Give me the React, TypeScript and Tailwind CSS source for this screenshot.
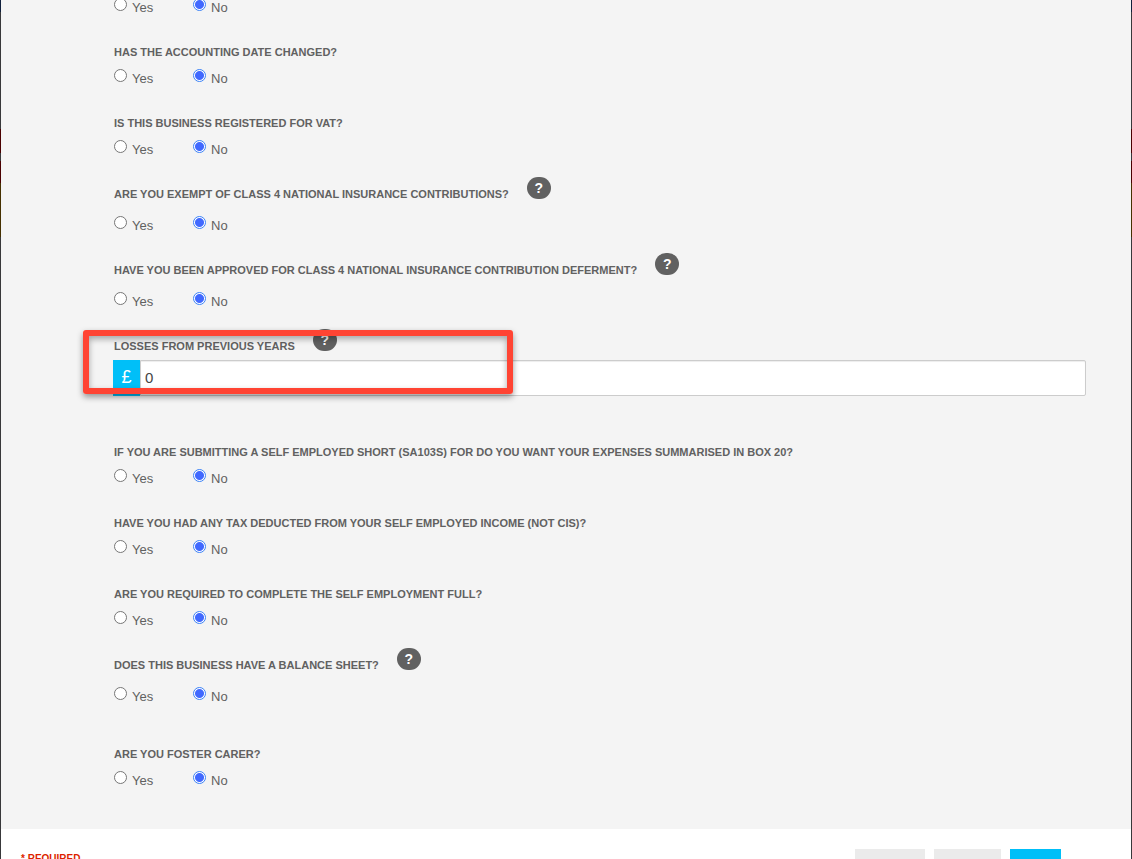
import React, { useState } from "react";

type QuestionProps = {
  name: string;
  title: string;
  help?: boolean;
};

const HelpButton = () => (
  <button
    type="button"
    aria-label="Help"
    className="-mt-[7px] ml-[18px] h-[22px] w-6 shrink-0 rounded-full bg-[#616161] text-center text-sm leading-[22px] font-bold text-white"
  >
    ?
  </button>
);

const Title = ({
  id,
  title,
  help,
}: {
  id: string;
  title: string;
  help?: boolean;
}) => (
  <div className={`flex items-start ${help ? "h-[25px]" : "h-5"}`}>
    <span
      id={id}
      className="text-[11px] leading-5 font-bold whitespace-nowrap uppercase"
    >
      {title}
    </span>
    {help && <HelpButton />}
  </div>
);

const Question = ({ name, title, help }: QuestionProps) => {
  const [value, setValue] = useState("No");

  return (
    <div role="radiogroup" aria-labelledby={`${name}-title`}>
      <Title id={`${name}-title`} title={title} help={help} />
      <div className="flex h-[27px] items-end">
        {["Yes", "No"].map((option) => (
          <label
            key={option}
            className="flex w-[79px] items-start gap-[5px] text-[13px] leading-5"
          >
            <input
              type="radio"
              name={name}
              value={option}
              checked={value === option}
              onChange={() => setValue(option)}
              className="size-[13px] shrink-0 appearance-none rounded-full border border-[#767676] bg-white checked:border-[#3b82f6] checked:bg-[radial-gradient(circle,#4169ff_4px,#ffffff_5px)]"
            />
            {option}
          </label>
        ))}
      </div>
    </div>
  );
};

const LossesField = () => {
  const [amount, setAmount] = useState("0");

  return (
    <div className="relative -ml-px">
      <div className="ml-px h-6">
        <Title id="losses-title" title="Losses from previous years" help />
      </div>
      <div className="flex h-9">
        <span className="w-[27px] shrink-0 bg-[#00bff8] text-center text-lg leading-[34px] font-medium text-white">
          £
        </span>
        <input
          type="text"
          aria-labelledby="losses-title"
          value={amount}
          onChange={(e) => setAmount(e.target.value)}
          className="min-w-0 flex-1 rounded-r-xs border border-[#cccccc] bg-white px-1 text-[15px] text-[#444444] shadow-[inset_0_1px_1px_#00000013] outline-none"
        />
      </div>
      {/* highlight drawn over the field */}
      <div className="pointer-events-none absolute -top-1.5 -left-[30px] h-16 w-[430px] rounded-[3px] border-6 border-[#ff4433] shadow-[0_3px_6px_#00000066,inset_0_3px_6px_#00000055]" />
    </div>
  );
};

const Backdrop = () => (
  <div className="flex w-px shrink-0 flex-col bg-[#38383a]">
    <div className="h-3 bg-[#10203c]" />
    <div className="mt-[117px] h-6 bg-[#4a0000]" />
    <div className="mt-2 h-[22px] bg-[#4a0000]" />
    <div className="h-[54px] bg-[#453000]" />
  </div>
);

export default () => {
  return (
    <div className="flex h-screen overflow-hidden bg-white font-['Helvetica_Neue',Helvetica,'Liberation_Sans',Arial,sans-serif] text-[#616161]">
      <Backdrop />
      <form className="flex min-w-0 flex-1 flex-col">
        <div className="-mt-[29px] shrink-0 bg-[#f4f4f4] pr-[45px] pb-[38px] pl-[113px]">
          <div className="flex flex-col gap-6">
            <Question name="ceased" title="Has this business ceased?" />
            <Question
              name="accounting-date"
              title="Has the accounting date changed?"
            />
            <Question name="vat" title="Is this business registered for VAT?" />
            <Question
              name="class4-exempt"
              title="Are you exempt of class 4 national insurance contributions?"
              help
            />
            <Question
              name="class4-deferment"
              title="Have you been approved for class 4 national insurance contribution deferment?"
              help
            />
            <LossesField />
          </div>
          <div className="mt-[46px] flex flex-col gap-6">
            <Question
              name="box20"
              title="If you are submitting a self employed short (SA103S) for do you want your expenses summarised in box 20?"
            />
            <Question
              name="tax-deducted"
              title="Have you had any tax deducted from your self employed income (not CIS)?"
            />
            <Question
              name="full"
              title="Are you required to complete the self employment full?"
            />
            <Question
              name="balance-sheet"
              title="Does this business have a balance sheet?"
              help
            />
          </div>
          <div className="mt-[37px]">
            <Question name="foster" title="Are you foster carer?" />
          </div>
        </div>
        <div className="flex shrink-0 items-start justify-between pt-5 pr-[70px] pl-5">
          <span className="text-[10px] leading-5 font-bold text-[#dd1f00] uppercase">
            * Required
          </span>
          <div className="flex gap-[9px]">
            <button
              type="button"
              aria-label="Cancel"
              className="h-9 w-[70px] bg-[#ebebeb]"
            />
            <button
              type="button"
              aria-label="Back"
              className="h-9 w-[67px] bg-[#ebebeb]"
            />
            <button
              type="submit"
              aria-label="Save"
              className="h-9 w-[51px] bg-[#00bff8]"
            />
          </div>
        </div>
      </form>
      <Backdrop />
    </div>
  );
};
